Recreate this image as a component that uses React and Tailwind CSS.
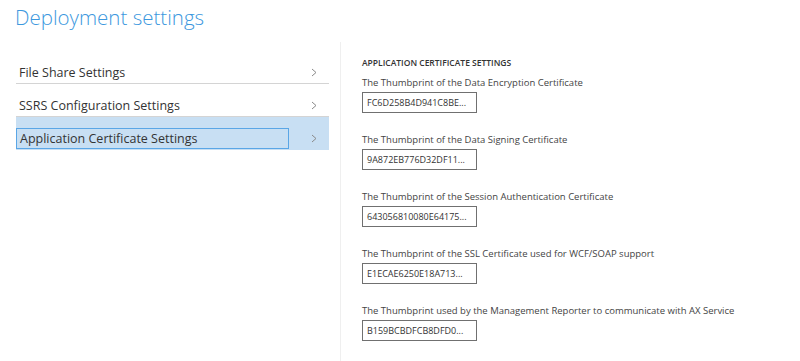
const items = [
  { label: "File Share Settings" },
  { label: "SSRS Configuration Settings" },
  { label: "Application Certificate Settings", active: true },
];

const fields = [
  {
    label: "The Thumbprint of the Data Encryption Certificate",
    value: "FC6D258B4D941C8BE...",
  },
  {
    label: "The Thumbprint of the Data Signing Certificate",
    value: "9A872EB776D32DF11...",
  },
  {
    label: "The Thumbprint of the Session Authentication Certificate",
    value: "643056810080E64175...",
  },
  {
    label: "The Thumbprint of the SSL Certificate used for WCF/SOAP support",
    value: "E1ECAE6250E18A713...",
  },
  {
    label:
      "The Thumbprint used by the Management Reporter to communicate with AX Service",
    value: "B159BCBDFCB8DFD0...",
  },
];

function Chevron() {
  return (
    <svg width="6" height="9" viewBox="0 0 6 9" className="text-[#8a8a8a]">
      <polyline
        points="1,1 5,4.5 1,8"
        fill="none"
        stroke="currentColor"
        strokeWidth="1"
      />
    </svg>
  );
}

export default function App() {
  return (
    <div
      className="w-[800px] h-[361px] bg-white overflow-hidden"
      style={{ fontFamily: '"Open Sans", "Noto Sans", sans-serif' }}
    >
      {/* Title */}
      <div className="h-[42px] pl-[15px] pt-[2px]">
        <h1 className="text-[20.5px] font-light text-[#3c98de] leading-[30px]">
          Deployment settings
        </h1>
      </div>

      <div className="flex">
        {/* Left menu */}
        <div className="w-[313px] ml-[16px] pt-[9px]">
          {items.map((item) => (
            <div
              key={item.label}
              className={`pt-[11px] border-b ${
                item.active
                  ? "bg-[#c8dff3] border-[#c8dff3]"
                  : "border-[#d4d4d4]"
              }`}
            >
              <div className="flex items-center">
                <div
                  className={`w-[273px] h-[21px] flex items-center pl-[3px] pt-[1px] text-[12.5px] text-[#333] ${
                    item.active ? "border border-[#5aa6e6]" : ""
                  }`}
                >
                  {item.label}
                </div>
                <div className="ml-[22px] flex items-center">
                  <Chevron />
                </div>
              </div>
            </div>
          ))}
        </div>

        {/* Right panel */}
        <div className="ml-[11px] border-l border-[#efefef] pl-[21px] pt-[14px] h-[319px]">
          <h2 className="text-[8.5px] font-semibold uppercase text-[#333] leading-[14px]">
            Application Certificate Settings
          </h2>
          <div className="mt-[6px] flex flex-col gap-[20px]">
            {fields.map((field) => (
              <div key={field.label}>
                <p className="text-[9.5px] text-[#444] leading-[14px]">
                  {field.label}
                </p>
                <div className="mt-[2px] w-[115px] h-[21px] border border-[#707070] flex items-center pl-[4px] text-[9px] text-[#333]">
                  {field.value}
                </div>
              </div>
            ))}
          </div>
        </div>
      </div>
    </div>
  );
}
